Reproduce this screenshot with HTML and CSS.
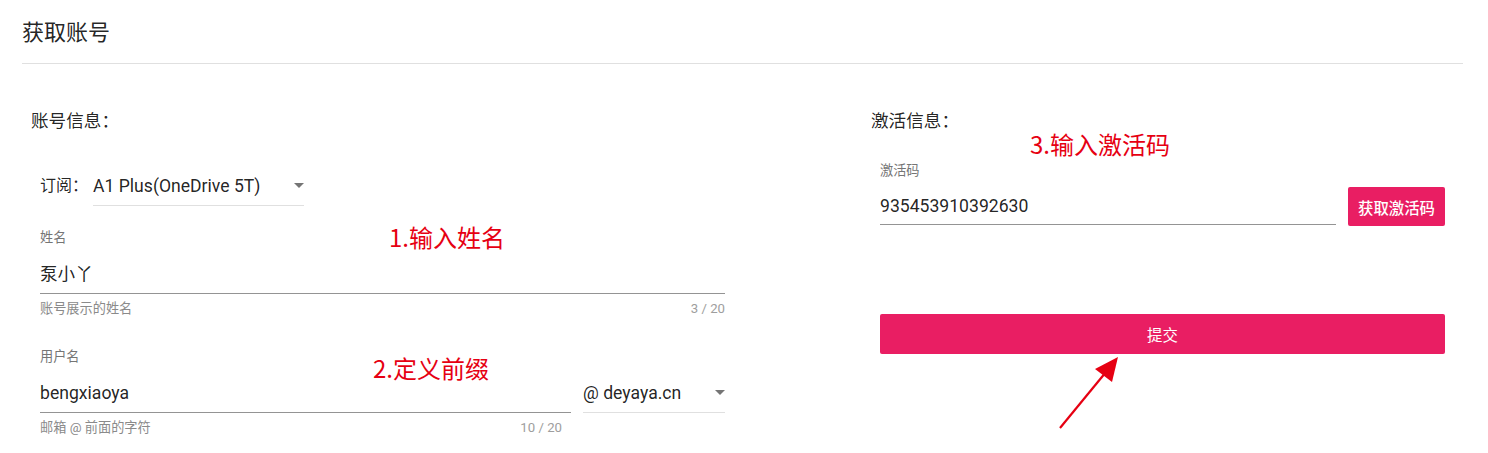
FILE: index.html
```html
<!DOCTYPE html>
<html lang="zh-CN">
<head>
<meta charset="utf-8">
<title>获取账号</title>
<link rel="stylesheet" href="styles.css">
</head>
<body>
<div class="page">
  <header class="page-header">
    <h1 class="page-title">获取账号</h1>
  </header>
  <main class="columns">
    <section class="col col-left">
      <h2 class="section-title">账号信息：</h2>
      <div class="sub-row">
        <span class="sub-label">订阅：</span>
        <div class="select sub-select">
          <span class="select-value">A1 Plus(OneDrive 5T)</span>
          <span class="caret"></span>
        </div>
      </div>
      <div class="field name-field">
        <div class="field-label">姓名</div>
        <div class="field-input">泵小丫</div>
        <div class="field-details">
          <span class="hint">账号展示的姓名</span>
          <span class="counter">3 / 20</span>
        </div>
      </div>
      <div class="user-row">
        <div class="field user-field">
          <div class="field-label">用户名</div>
          <div class="field-input">bengxiaoya</div>
          <div class="field-details details-pad">
            <span class="hint">邮箱 @ 前面的字符</span>
            <span class="counter">10 / 20</span>
          </div>
        </div>
        <div class="select domain-select">
          <span class="select-value">@ deyaya.cn</span>
          <span class="caret"></span>
        </div>
      </div>
    </section>
    <section class="col col-right">
      <h2 class="section-title">激活信息：</h2>
      <div class="code-row">
        <div class="field code-field">
          <div class="field-label">激活码</div>
          <div class="field-input code-input">935453910392630</div>
        </div>
        <button class="btn btn-fetch" type="button">获取激活码</button>
      </div>
      <button class="btn btn-submit" type="button">提交</button>
    </section>
  </main>

  <div class="note note-1">1.输入姓名</div>
  <div class="note note-2">2.定义前缀</div>
  <div class="note note-3">3.输入激活码</div>
  <svg class="note-arrow" width="80" height="90" viewBox="1050 350 80 90" aria-hidden="true">
    <line x1="1060" y1="428" x2="1106" y2="372" stroke="#e60012" stroke-width="2.2"/>
    <polygon points="1118,357 1095,369 1112,382" fill="#e60012"/>
  </svg>
</div>
</body>
</html>
```
FILE: styles.css
```css
* { box-sizing: border-box; }

html, body {
  margin: 0;
  padding: 0;
  background: #ffffff;
}

body {
  font-family: Roboto, "Noto Sans CJK SC", "Noto Sans", sans-serif;
  color: rgba(0, 0, 0, 0.87);
}

.page {
  position: relative;
  width: 1488px;
  height: 453px;
  padding: 0 25px 0 22px;
  overflow: hidden;
}

.page-header {
  padding: 18px 0 15px;
  border-bottom: 1px solid #e0e0e0;
}

.page-title {
  margin: 0;
  font-size: 22px;
  line-height: 30px;
  font-weight: 400;
  color: rgba(0, 0, 0, 0.87);
}

.columns {
  display: grid;
  grid-template-columns: 703px 583px;
  column-gap: 137px;
  padding: 45px 0 0 9px;
}

.section-title {
  margin: 0;
  font-size: 17.6px;
  line-height: 24px;
  font-weight: 400;
  color: rgba(0, 0, 0, 0.87);
}

.col-left,
.col-right {
  display: flex;
  flex-direction: column;
}

.col-left > :not(.section-title),
.col-right > :not(.section-title) {
  margin-left: 9px;
  margin-right: 9px;
}

/* subscription row */
.sub-row {
  display: flex;
  align-items: flex-start;
  margin-top: 40px;
}

.sub-label {
  font-size: 16px;
  line-height: 26px;
  padding-right: 5px;
  color: rgba(0, 0, 0, 0.87);
}

.select {
  position: relative;
  display: flex;
  align-items: center;
  height: 33px;
  padding-bottom: 6px;
  border-bottom: 1px solid #e0e0e0;
}

.select-value {
  font-size: 17.6px;
  line-height: 26px;
  color: rgba(0, 0, 0, 0.87);
  white-space: nowrap;
}

.caret {
  position: absolute;
  right: 0;
  top: 10px;
  width: 0;
  height: 0;
  border-left: 5px solid transparent;
  border-right: 5px solid transparent;
  border-top: 5px solid #757575;
}

.sub-select {
  width: 211px;
}

/* text fields */
.field-label {
  font-size: 13.2px;
  line-height: 18px;
  color: #757575;
}

.field-input {
  margin-top: 14px;
  font-size: 17.6px;
  line-height: 26px;
  padding-bottom: 6px;
  border-bottom: 1px solid #949494;
  color: rgba(0, 0, 0, 0.87);
}

.field-details {
  display: flex;
  justify-content: space-between;
  margin-top: 6px;
  font-size: 13.2px;
  line-height: 18px;
}

.details-pad {
  padding-right: 9px;
}

.hint {
  color: #8a8a8a;
}

.counter {
  color: #9e9e9e;
}

.name-field {
  margin-top: 23px;
}

.user-row {
  display: flex;
  gap: 12px;
  margin-top: 30px;
}

.user-field {
  flex: 1;
}

.domain-select {
  width: 142px;
  margin-top: 32px;
}

/* right column */
.code-row {
  display: flex;
  gap: 12px;
  margin-top: 29px;
}

.code-field {
  flex: 1;
}

.code-input {
  margin-top: 13px;
  padding-bottom: 5px;
}

.btn {
  border: none;
  border-radius: 2px;
  background: #e91e63;
  color: #ffffff;
  font-family: Roboto, "Noto Sans CJK SC", sans-serif;
  font-size: 15.4px;
  font-weight: 500;
  cursor: pointer;
  padding: 0;
}

.btn-fetch {
  align-self: flex-end;
  width: 97px;
  height: 39px;
  margin-bottom: -1px;
}

.btn-submit {
  margin-top: 89px;
  height: 40px;
  font-weight: 400;
}

/* annotations drawn over the screenshot */
.note {
  position: absolute;
  font-family: "Noto Sans CJK SC", sans-serif;
  font-size: 24px;
  line-height: 30px;
  color: #e60012;
  white-space: nowrap;
}

.note-1 { left: 389px; top: 222px; }
.note-2 { left: 373px; top: 353px; }
.note-3 { left: 1030px; top: 129px; }

.note-arrow {
  position: absolute;
  left: 1050px;
  top: 350px;
}
```
